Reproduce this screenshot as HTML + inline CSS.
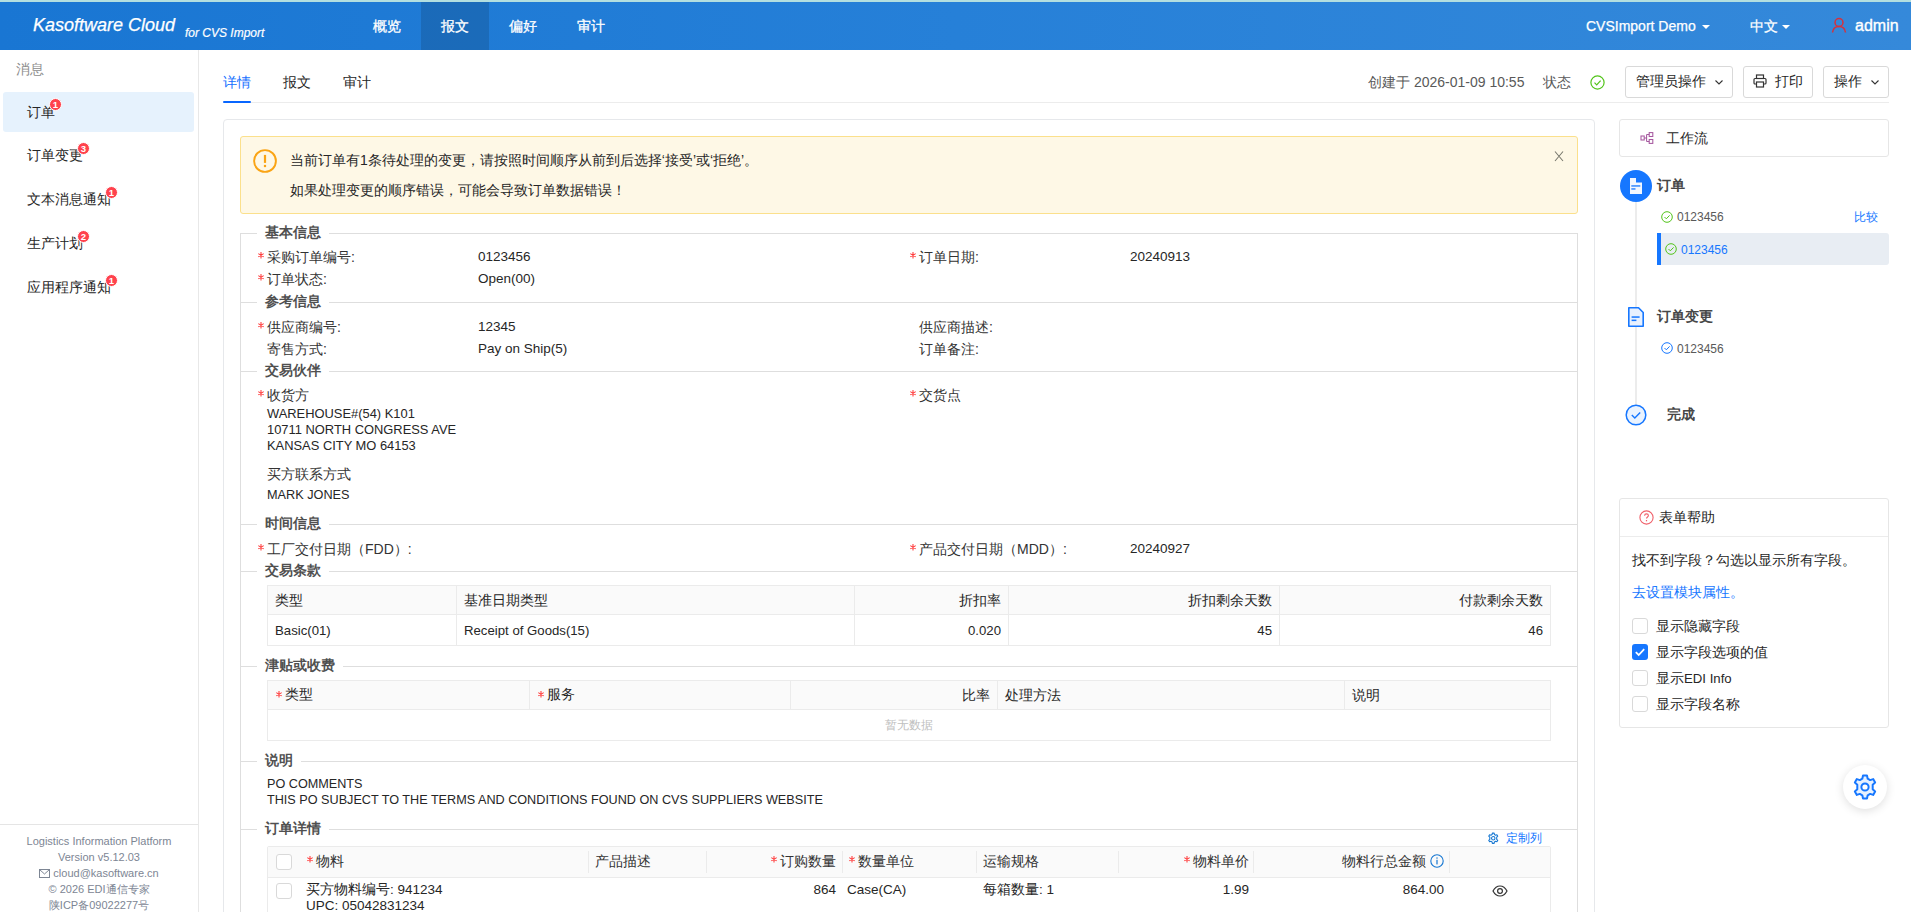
<!DOCTYPE html>
<html><head><meta charset="utf-8">
<style>
*{box-sizing:border-box;margin:0;padding:0}
html,body{width:1911px;height:912px;overflow:hidden;background:#fff}
body{position:relative;font-family:"Liberation Sans",sans-serif;font-size:14px;color:#262626}
.a{position:absolute;white-space:nowrap}
/* header */
#top{position:absolute;left:0;top:0;width:1911px;height:2px;background:#b3dfe0}
#hdr{position:absolute;left:0;top:2px;width:1911px;height:48px;background:linear-gradient(90deg,#1976d3 0%,#2680d8 50%,#3589da 100%)}
.nav{position:absolute;top:0;height:48px;width:68px;text-align:center;line-height:49px;color:#fff;font-size:14px;-webkit-text-stroke:0.3px #fff}
.nav.on{background:rgba(0,0,0,.13)}
.caret{display:inline-block;width:0;height:0;border-left:4px solid transparent;border-right:4px solid transparent;border-top:4px solid #fff;vertical-align:middle}
/* sidebar */
#side{position:absolute;left:0;top:50px;width:199px;height:862px;border-right:1px solid #e8e8e8}
.si{position:absolute;left:27px;font-size:14px;color:#262626;line-height:20px}
.badge{position:absolute;width:13px;height:13px;border-radius:50%;background:#ff424d;border:1px solid #fff;color:#fff;font-size:9.5px;line-height:11px;text-align:center;font-weight:bold}
.foot{position:absolute;left:0;width:198px;text-align:center;font-size:11px;color:#7d8694;line-height:16px}
/* tabs */
.tab{position:absolute;top:72px;font-size:14px;line-height:20px;color:#262626}
.btn{position:absolute;top:66px;height:32px;border:1px solid #d9d9d9;border-radius:3px;background:#fff;font-size:14px;line-height:29px;color:#262626;padding-left:10px}
/* card */
#card{position:absolute;left:223px;top:119px;width:1372px;height:820px;border:1px solid #e6e8eb;border-radius:4px}
#alert{position:absolute;left:240px;top:136px;width:1338px;height:78px;background:#fef8e6;border:1px solid #fbe08c;border-radius:3px}
.lg{position:absolute;font-weight:bold;font-size:13.5px;color:#505050;line-height:18px;background:#fff;padding:0 8px}
.hl{position:absolute;left:240px;width:1338px;height:1px;background:#dedede}
.lab{position:absolute;font-size:14px;line-height:20px;color:#333}
.val{position:absolute;font-size:13.5px;line-height:20px;color:#262626}
.req{color:#f5222d;font-size:13px;margin-right:3px}
.rq{position:absolute;left:-9.5px;top:5px;width:6px;height:6.5px;stroke:#ff3b3b;stroke-width:1.05;fill:none}
.rqi{position:relative;display:inline-block;width:0;height:20px;vertical-align:top}
table{border-collapse:collapse}
.tbl{position:absolute;border:1px solid #ebebeb}
.tbl td,.tbl th{font-weight:normal;font-size:14px;color:#262626;border:1px solid #ebebeb;padding:0 7px;white-space:nowrap}
.tbl th{background:#fafafa;height:29px;padding-top:2px}
.tbl td{height:31px}
.r{text-align:right}
/* right panel */
.box{position:absolute;left:1619px;width:270px;border:1px solid #e6e6e6;border-radius:3px;background:#fff}
.cb{position:absolute;width:16px;height:16px;border:1px solid #d9d9d9;border-radius:3px;background:#fff}
</style></head><body>
<div id="top"></div>
<div id="hdr">
  <div class="a" style="left:33px;top:10px;font-size:18px;font-style:italic;color:#fff;line-height:26px;-webkit-text-stroke:0.25px #fff">Kasoftware Cloud</div>
  <div class="a" style="left:185px;top:23px;font-size:12px;font-style:italic;color:#fff;line-height:16px;-webkit-text-stroke:0.2px #fff">for CVS Import</div>
  <div class="nav" style="left:353px">概览</div>
  <div class="nav on" style="left:421px">报文</div>
  <div class="nav" style="left:489px">偏好</div>
  <div class="nav" style="left:557px">审计</div>
  <div class="a" style="left:1586px;top:14px;font-size:14px;color:#fff;line-height:20px;-webkit-text-stroke:0.25px #fff">CVSImport Demo <span class="caret" style="margin-left:2px"></span></div>
  <div class="a" style="left:1750px;top:14px;font-size:14px;color:#fff;line-height:20px;-webkit-text-stroke:0.25px #fff">中文 <span class="caret"></span></div>
  <svg class="a" style="left:1831px;top:15px" width="16" height="16" viewBox="0 0 16 16"><circle cx="8" cy="5.5" r="4" fill="none" stroke="#d8303a" stroke-width="1.5"/><path d="M1.5 15.5 C2 11 4.5 9.5 8 9.5 C11.5 9.5 14 11 14.5 15.5" fill="none" stroke="#d8303a" stroke-width="1.5"/></svg>
  <div class="a" style="left:1855px;top:13px;font-size:16px;color:#fff;line-height:22px;-webkit-text-stroke:0.35px #fff">admin</div>
</div>

<!-- sidebar -->
<div id="side">
  <div class="a" style="left:16px;top:9px;font-size:14px;color:#8c8c8c;line-height:20px">消息</div>
  <div class="a" style="left:3px;top:42px;width:191px;height:40px;background:#e6f2fd;border-radius:3px"></div>
  <div class="si" style="top:52px">订单</div><div class="badge" style="left:49px;top:48px">1</div>
  <div class="si" style="top:95px">订单变更</div><div class="badge" style="left:77px;top:92px">3</div>
  <div class="si" style="top:139px">文本消息通知</div><div class="badge" style="left:105px;top:136px">1</div>
  <div class="si" style="top:183px">生产计划</div><div class="badge" style="left:77px;top:180px">2</div>
  <div class="si" style="top:227px">应用程序通知</div><div class="badge" style="left:105px;top:224px">1</div>
  <div class="a" style="left:0;top:774px;width:198px;height:1px;background:#e5e5e5"></div>
  <div class="foot" style="top:783px">Logistics Information Platform</div>
  <div class="foot" style="top:799px">Version v5.12.03</div>
  <div class="foot" style="top:815px"><svg width="11" height="9" viewBox="0 0 11 9" style="vertical-align:-1px"><rect x="0.5" y="0.5" width="10" height="8" fill="none" stroke="#7d8694"/><path d="M0.5 0.5 L5.5 5 L10.5 0.5" fill="none" stroke="#7d8694"/></svg> cloud@kasoftware.cn</div>
  <div class="foot" style="top:831px">© 2026 EDI通信专家</div>
  <div class="foot" style="top:847px">陕ICP备09022277号</div>
</div>

<!-- tabs -->
<div class="tab" style="left:223px;color:#1570ff">详情</div>
<div class="a" style="left:223px;top:101px;width:28px;height:2px;background:#0866ff;border-radius:1px;z-index:2"></div>
<div class="tab" style="left:283px">报文</div>
<div class="tab" style="left:343px">审计</div>
<div class="a" style="left:223px;top:102px;width:1666px;height:1px;background:#ececec"></div>
<div class="a" style="left:1368px;top:72px;line-height:20px;color:#595959;font-size:14px">创建于 2026-01-09 10:55</div>
<div class="a" style="left:1543px;top:72px;line-height:20px;color:#595959;font-size:14px">状态</div>
<svg class="a" style="left:1590px;top:75px" width="15" height="15" viewBox="0 0 15 15"><circle cx="7.5" cy="7.5" r="6.6" fill="none" stroke="#52c41a" stroke-width="1.2"/><path d="M4.5 7.6 L6.7 9.8 L10.6 5.6" fill="none" stroke="#52c41a" stroke-width="1.2"/></svg>
<div class="btn" style="left:1625px;width:108px">管理员操作 <svg width="10" height="10" viewBox="0 0 10 10" style="margin-left:4px;vertical-align:-1px"><path d="M1.5 3.5 L5 7 L8.5 3.5" fill="none" stroke="#333" stroke-width="1.1"/></svg></div>
<div class="btn" style="left:1743px;width:70px;padding-left:9px"><svg width="14" height="14" viewBox="0 0 14 14" style="vertical-align:-2px;margin-right:8px"><rect x="3.5" y="1" width="7" height="3.5" fill="none" stroke="#333" stroke-width="1.2"/><rect x="1" y="4.5" width="12" height="5.5" rx="1" fill="none" stroke="#333" stroke-width="1.2"/><rect x="3.5" y="8" width="7" height="5" fill="#fff" stroke="#333" stroke-width="1.2"/></svg>打印</div>
<div class="btn" style="left:1823px;width:66px">操作 <svg width="10" height="10" viewBox="0 0 10 10" style="margin-left:4px;vertical-align:-1px"><path d="M1.5 3.5 L5 7 L8.5 3.5" fill="none" stroke="#333" stroke-width="1.1"/></svg></div>

<!-- card -->
<div id="card"></div>
<div id="alert">
  <svg class="a" style="left:12px;top:12px" width="24" height="24" viewBox="0 0 24 24"><circle cx="12" cy="12" r="10.9" fill="none" stroke="#faa414" stroke-width="1.9"/><rect x="10.9" y="5.9" width="2.2" height="8" fill="#faa414"/><circle cx="12" cy="16.9" r="1.25" fill="#faa414"/></svg>
  <div class="a" style="left:49px;top:13px;line-height:20px;color:#262626">当前订单有1条待处理的变更，请按照时间顺序从前到后选择‘接受’或‘拒绝’。</div>
  <div class="a" style="left:49px;top:43px;line-height:20px;color:#262626">如果处理变更的顺序错误，可能会导致订单数据错误！</div>
  <svg class="a" style="left:1313px;top:14px" width="10" height="11" viewBox="0 0 10 11"><path d="M1 0.5 L9 10 M9 0.5 L1 10" stroke="#77776c" stroke-width="1.05"/></svg>
</div>

<!-- fieldset borders -->
<div class="a" style="left:240px;top:233px;width:1338px;height:700px;border-left:1px solid #dedede;border-right:1px solid #dedede"></div>

<!-- sections -->
<div class="hl" style="top:233px"></div><div class="lg" style="left:257px;top:224px">基本信息</div>
<div class="lab" style="left:267px;top:247px"><svg class="rq" viewBox="0 0 6 6.5"><path d="M3 0V6.5M0.3 1.6L5.7 4.9M0.3 4.9L5.7 1.6"/></svg>采购订单编号:</div>
<div class="val" style="left:478px;top:247px">0123456</div>
<div class="lab" style="left:919px;top:247px"><svg class="rq" viewBox="0 0 6 6.5"><path d="M3 0V6.5M0.3 1.6L5.7 4.9M0.3 4.9L5.7 1.6"/></svg>订单日期:</div>
<div class="val" style="left:1130px;top:247px">20240913</div>
<div class="lab" style="left:267px;top:269px"><svg class="rq" viewBox="0 0 6 6.5"><path d="M3 0V6.5M0.3 1.6L5.7 4.9M0.3 4.9L5.7 1.6"/></svg>订单状态:</div>
<div class="val" style="left:478px;top:269px">Open(00)</div>

<div class="hl" style="top:302px"></div><div class="lg" style="left:257px;top:293px">参考信息</div>
<div class="lab" style="left:267px;top:317px"><svg class="rq" viewBox="0 0 6 6.5"><path d="M3 0V6.5M0.3 1.6L5.7 4.9M0.3 4.9L5.7 1.6"/></svg>供应商编号:</div>
<div class="val" style="left:478px;top:317px">12345</div>
<div class="lab" style="left:919px;top:317px">供应商描述:</div>
<div class="lab" style="left:267px;top:339px">寄售方式:</div>
<div class="val" style="left:478px;top:339px">Pay on Ship(5)</div>
<div class="lab" style="left:919px;top:339px">订单备注:</div>

<div class="hl" style="top:371px"></div><div class="lg" style="left:257px;top:362px">交易伙伴</div>
<div class="lab" style="left:267px;top:385px"><svg class="rq" viewBox="0 0 6 6.5"><path d="M3 0V6.5M0.3 1.6L5.7 4.9M0.3 4.9L5.7 1.6"/></svg>收货方</div>
<div class="lab" style="left:919px;top:385px"><svg class="rq" viewBox="0 0 6 6.5"><path d="M3 0V6.5M0.3 1.6L5.7 4.9M0.3 4.9L5.7 1.6"/></svg>交货点</div>
<div class="val" style="left:267px;top:406px;line-height:16px;font-size:12.9px">WAREHOUSE#(54) K101<br>10711 NORTH CONGRESS AVE<br>KANSAS CITY MO 64153</div>
<div class="lab" style="left:267px;top:464px">买方联系方式</div>
<div class="val" style="left:267px;top:485px;font-size:12.7px">MARK JONES</div>

<div class="hl" style="top:524px"></div><div class="lg" style="left:257px;top:515px">时间信息</div>
<div class="lab" style="left:267px;top:539px"><svg class="rq" viewBox="0 0 6 6.5"><path d="M3 0V6.5M0.3 1.6L5.7 4.9M0.3 4.9L5.7 1.6"/></svg>工厂交付日期（FDD）:</div>
<div class="lab" style="left:919px;top:539px"><svg class="rq" viewBox="0 0 6 6.5"><path d="M3 0V6.5M0.3 1.6L5.7 4.9M0.3 4.9L5.7 1.6"/></svg>产品交付日期（MDD）:</div>
<div class="val" style="left:1130px;top:539px">20240927</div>

<div class="hl" style="top:571px"></div><div class="lg" style="left:257px;top:562px">交易条款</div>
<table class="tbl" style="left:267px;top:585px;width:1284px">
<tr><th style="width:189px;text-align:left">类型</th><th style="width:398px;text-align:left">基准日期类型</th><th class="r" style="width:154px">折扣率</th><th class="r" style="width:271px">折扣剩余天数</th><th class="r">付款剩余天数</th></tr>
<tr style="font-size:13.2px"><td style="font-size:13.2px">Basic(01)</td><td style="font-size:13.2px">Receipt of Goods(15)</td><td class="r" style="font-size:13.2px">0.020</td><td class="r" style="font-size:13.2px">45</td><td class="r" style="font-size:13.2px">46</td></tr>
</table>

<div class="hl" style="top:666px"></div><div class="lg" style="left:257px;top:657px">津贴或收费</div>
<table class="tbl" style="left:267px;top:680px;width:1284px">
<tr><th style="width:262px;text-align:left"><span class="rqi" style="margin-left:10px"><svg class="rq" viewBox="0 0 6 6.5"><path d="M3 0V6.5M0.3 1.6L5.7 4.9M0.3 4.9L5.7 1.6"/></svg></span>类型</th><th style="width:261px;text-align:left"><span class="rqi" style="margin-left:10px"><svg class="rq" viewBox="0 0 6 6.5"><path d="M3 0V6.5M0.3 1.6L5.7 4.9M0.3 4.9L5.7 1.6"/></svg></span>服务</th><th class="r" style="width:207px">比率</th><th style="width:347px;text-align:left">处理方法</th><th style="text-align:left">说明</th></tr>
<tr><td colspan="5" style="text-align:center;color:#bfbfbf;font-size:12px;height:31px">暂无数据</td></tr>
</table>

<div class="hl" style="top:761px"></div><div class="lg" style="left:257px;top:752px">说明</div>
<div class="val" style="left:267px;top:776px;line-height:16px;font-size:12.65px">PO COMMENTS<br>THIS PO SUBJECT TO THE TERMS AND CONDITIONS FOUND ON CVS SUPPLIERS WEBSITE</div>

<div class="hl" style="top:829px"></div><div class="lg" style="left:257px;top:820px">订单详情</div>
<svg class="a" style="left:1487px;top:832px" width="12.5" height="12.5" viewBox="0 0 24 24"><path d="M10.3 2.2 H13.7 L14.3 4.9 L16.4 6.1 L19 5.2 L20.7 8.1 L18.6 10 V14 L20.7 15.9 L19 18.8 L16.4 17.9 L14.3 19.1 L13.7 21.8 H10.3 L9.7 19.1 L7.6 17.9 L5 18.8 L3.3 15.9 L5.4 14 V10 L3.3 8.1 L5 5.2 L7.6 6.1 L9.7 4.9 Z" fill="none" stroke="#1677d2" stroke-width="2.1" stroke-linejoin="round"/><circle cx="12" cy="12" r="3.3" fill="none" stroke="#1677d2" stroke-width="2.1"/></svg><div class="a" style="left:1506px;top:829px;font-size:11.8px;color:#1677ff;line-height:18px">定制列</div>
<div class="a" style="left:267px;top:846px;width:1284px;height:80px;border:1px solid #ebebeb;border-radius:2px"></div>
<div class="a" style="left:268px;top:847px;width:1282px;height:31px;background:#fafafa;border-bottom:1px solid #ebebeb"></div>

<!-- order detail table -->
<div class="cb" style="left:276px;top:854px"></div>
<div class="cb" style="left:276px;top:883px"></div>
<div class="a" style="left:588px;top:851px;width:1px;height:22px;background:#ebebeb"></div>
<div class="a" style="left:706px;top:851px;width:1px;height:22px;background:#ebebeb"></div>
<div class="a" style="left:842px;top:851px;width:1px;height:22px;background:#ebebeb"></div>
<div class="a" style="left:976px;top:851px;width:1px;height:22px;background:#ebebeb"></div>
<div class="a" style="left:1118px;top:851px;width:1px;height:22px;background:#ebebeb"></div>
<div class="a" style="left:1253px;top:851px;width:1px;height:22px;background:#ebebeb"></div>
<div class="a" style="left:1449px;top:851px;width:1px;height:22px;background:#ebebeb"></div>
<div class="lab" style="left:316px;top:851px"><svg class="rq" viewBox="0 0 6 6.5"><path d="M3 0V6.5M0.3 1.6L5.7 4.9M0.3 4.9L5.7 1.6"/></svg>物料</div>
<div class="lab" style="left:595px;top:851px">产品描述</div>
<div class="lab" style="left:770px;top:851px;width:66px;text-align:right"><span class="rqi"><svg class="rq" viewBox="0 0 6 6.5"><path d="M3 0V6.5M0.3 1.6L5.7 4.9M0.3 4.9L5.7 1.6"/></svg></span>订购数量</div>
<div class="lab" style="left:858px;top:851px"><svg class="rq" viewBox="0 0 6 6.5"><path d="M3 0V6.5M0.3 1.6L5.7 4.9M0.3 4.9L5.7 1.6"/></svg>数量单位</div>
<div class="lab" style="left:983px;top:851px">运输规格</div>
<div class="lab" style="left:1170px;top:851px;width:79px;text-align:right"><span class="rqi"><svg class="rq" viewBox="0 0 6 6.5"><path d="M3 0V6.5M0.3 1.6L5.7 4.9M0.3 4.9L5.7 1.6"/></svg></span>物料单价</div>
<div class="lab" style="left:1340px;top:851px;width:86px;text-align:right">物料行总金额</div>
<svg class="a" style="left:1430px;top:854px" width="14" height="14" viewBox="0 0 14 14"><circle cx="7" cy="7" r="6.2" fill="none" stroke="#1677d2" stroke-width="1.1"/><rect x="6.4" y="5.8" width="1.2" height="4.6" fill="#1677d2"/><rect x="6.4" y="3.4" width="1.2" height="1.3" fill="#1677d2"/></svg>
<div class="val" style="left:306px;top:882px;line-height:16px">买方物料编号: 941234<br>UPC: 05042831234</div>
<div class="val" style="left:770px;top:880px;width:66px;text-align:right;line-height:20px">864</div>
<div class="val" style="left:847px;top:880px;line-height:20px">Case(CA)</div>
<div class="val" style="left:983px;top:880px;line-height:20px">每箱数量: 1</div>
<div class="val" style="left:1170px;top:880px;width:79px;text-align:right;line-height:20px">1.99</div>
<div class="val" style="left:1340px;top:880px;width:104px;text-align:right;line-height:20px">864.00</div>
<svg class="a" style="left:1492px;top:885px" width="16" height="12" viewBox="0 0 16 12"><path d="M1 6 C3 2.2 5.5 1 8 1 C10.5 1 13 2.2 15 6 C13 9.8 10.5 11 8 11 C5.5 11 3 9.8 1 6 Z" fill="none" stroke="#333" stroke-width="1.2"/><circle cx="8" cy="6" r="2.4" fill="none" stroke="#333" stroke-width="1.2"/></svg>

<!-- right panel -->
<div class="box" style="top:119px;height:38px"></div>
<svg class="a" style="left:1640px;top:132px" width="14" height="12" viewBox="0 0 14 12"><g fill="none" stroke="#a6589f" stroke-width="1.05"><rect x="1" y="4" width="3.2" height="4"/><rect x="9.2" y="0.6" width="3.6" height="3.9"/><rect x="9.2" y="7.5" width="3.6" height="3.9"/><path d="M4.2 6 H6.6 M6.6 2.5 V9.5 M6.6 2.5 H9.2 M6.6 9.5 H9.2"/></g></svg>
<div class="a" style="left:1666px;top:128px;font-size:14px;line-height:20px;color:#262626">工作流</div>
<div class="a" style="left:1635px;top:200px;width:2px;height:206px;background:#ececec"></div>
<div class="a" style="left:1620px;top:170px;width:32px;height:32px;border-radius:50%;background:#1677ff"></div>
<svg class="a" style="left:1630px;top:178px" width="12" height="16" viewBox="0 0 12 16"><path d="M0 0 H6 V4.5 H12 V16 H0 Z" fill="#f2f7ff"/><rect x="1.3" y="7.3" width="9" height="1.3" fill="#1677ff"/><rect x="1.3" y="10.3" width="4.2" height="1.3" fill="#1677ff"/></svg>
<div class="a" style="left:1657px;top:175px;font-size:14px;font-weight:bold;line-height:20px;color:#474747">订单</div>
<svg class="a" style="left:1661px;top:211px" width="12" height="12" viewBox="0 0 12 12"><circle cx="6" cy="6" r="5.3" fill="none" stroke="#52c41a" stroke-width="1"/><path d="M3.5 6 L5.3 7.8 L8.6 4.4" fill="none" stroke="#52c41a" stroke-width="1"/></svg>
<div class="a" style="left:1677px;top:208px;font-size:12px;line-height:18px;color:#595959">0123456</div>
<div class="a" style="left:1854px;top:208px;font-size:12px;line-height:18px;color:#1677ff">比较</div>
<div class="a" style="left:1657px;top:233px;width:232px;height:32px;background:#e8edf3;border-left:4px solid #1677ff;border-radius:0 3px 3px 0"></div>
<svg class="a" style="left:1665px;top:243px" width="12" height="12" viewBox="0 0 12 12"><circle cx="6" cy="6" r="5.3" fill="none" stroke="#52c41a" stroke-width="1"/><path d="M3.5 6 L5.3 7.8 L8.6 4.4" fill="none" stroke="#52c41a" stroke-width="1"/></svg>
<div class="a" style="left:1681px;top:241px;font-size:12px;line-height:18px;color:#1677ff">0123456</div>
<svg class="a" style="left:1628px;top:307px" width="16" height="20" viewBox="0 0 16 20"><path d="M0.8 0.8 H10.5 L15.2 5.5 V19.2 H0.8 Z" fill="#e8f1ff" stroke="#1677ff" stroke-width="1.6" stroke-linejoin="round"/><rect x="3.6" y="9.3" width="8" height="1.5" fill="#1677ff"/><rect x="3.6" y="12.6" width="4.8" height="1.5" fill="#1677ff"/></svg>
<div class="a" style="left:1657px;top:306px;font-size:14px;font-weight:bold;line-height:20px;color:#474747">订单变更</div>
<svg class="a" style="left:1661px;top:342px" width="12" height="12" viewBox="0 0 12 12"><circle cx="6" cy="6" r="5.3" fill="none" stroke="#1677ff" stroke-width="1"/><path d="M3.5 6 L5.3 7.8 L8.6 4.4" fill="none" stroke="#1677ff" stroke-width="1"/></svg>
<div class="a" style="left:1677px;top:340px;font-size:12px;line-height:18px;color:#595959">0123456</div>
<div class="a" style="left:1625px;top:405px;width:22px;height:22px;border-radius:50%;background:#fff"></div>
<svg class="a" style="left:1625px;top:404px" width="22" height="22" viewBox="0 0 22 22"><circle cx="11" cy="11" r="9.8" fill="#eaf3ff" stroke="#1677ff" stroke-width="1.5"/><path d="M6.8 11 L9.8 14 L15.2 8.4" fill="none" stroke="#1677ff" stroke-width="1.4"/></svg>
<div class="a" style="left:1667px;top:404px;font-size:14px;font-weight:bold;line-height:20px;color:#474747">完成</div>

<div class="box" style="top:498px;height:230px"></div>
<div class="a" style="left:1620px;top:536px;width:268px;height:1px;background:#ececec"></div>
<svg class="a" style="left:1639px;top:510px" width="15" height="15" viewBox="0 0 15 15"><circle cx="7.5" cy="7.5" r="6.6" fill="none" stroke="#f0606a" stroke-width="1.1"/><path d="M5.6 5.8 C5.6 4.6 6.4 3.9 7.5 3.9 C8.6 3.9 9.4 4.6 9.4 5.6 C9.4 6.9 7.5 7.1 7.5 8.6" fill="none" stroke="#f0606a" stroke-width="1.1"/><rect x="6.9" y="10" width="1.2" height="1.3" fill="#f0606a"/></svg>
<div class="a" style="left:1659px;top:507px;font-size:14px;line-height:20px;color:#262626">表单帮助</div>
<div class="a" style="left:1632px;top:550px;font-size:14px;line-height:20px;color:#262626">找不到字段？勾选以显示所有字段。</div>
<div class="a" style="left:1632px;top:582px;font-size:14px;line-height:20px;color:#1677ff">去设置模块属性。</div>
<div class="cb" style="left:1632px;top:618px"></div>
<div class="a" style="left:1632px;top:644px;width:16px;height:16px;border-radius:3px;background:#1677ff"></div>
<svg class="a" style="left:1632px;top:644px" width="16" height="16" viewBox="0 0 16 16"><path d="M3.8 8.2 L6.7 11 L12.2 5.2" fill="none" stroke="#fff" stroke-width="1.8"/></svg>
<div class="cb" style="left:1632px;top:670px"></div>
<div class="cb" style="left:1632px;top:696px"></div>
<div class="a" style="left:1656px;top:616px;font-size:14px;line-height:20px;color:#262626">显示隐藏字段</div>
<div class="a" style="left:1656px;top:642px;font-size:14px;line-height:20px;color:#262626">显示字段选项的值</div>
<div class="a" style="left:1656px;top:668px;font-size:14px;line-height:20px;color:#262626">显示<span style="font-size:13.2px">EDI Info</span></div>
<div class="a" style="left:1656px;top:694px;font-size:14px;line-height:20px;color:#262626">显示字段名称</div>

<div class="a" style="left:1843px;top:765px;width:44px;height:44px;border-radius:50%;background:#fff;box-shadow:0 2px 10px rgba(0,0,0,.13)"></div>
<svg class="a" style="left:1851px;top:773px" width="28" height="28" viewBox="0 0 24 24"><path d="M10.3 2.2 H13.7 L14.3 4.9 L16.4 6.1 L19 5.2 L20.7 8.1 L18.6 10 V14 L20.7 15.9 L19 18.8 L16.4 17.9 L14.3 19.1 L13.7 21.8 H10.3 L9.7 19.1 L7.6 17.9 L5 18.8 L3.3 15.9 L5.4 14 V10 L3.3 8.1 L5 5.2 L7.6 6.1 L9.7 4.9 Z" fill="#e6f1ff" stroke="#1677ff" stroke-width="1.7" stroke-linejoin="round"/><circle cx="12" cy="12" r="3.1" fill="#fff" stroke="#1677ff" stroke-width="1.7"/></svg>
</body></html>
